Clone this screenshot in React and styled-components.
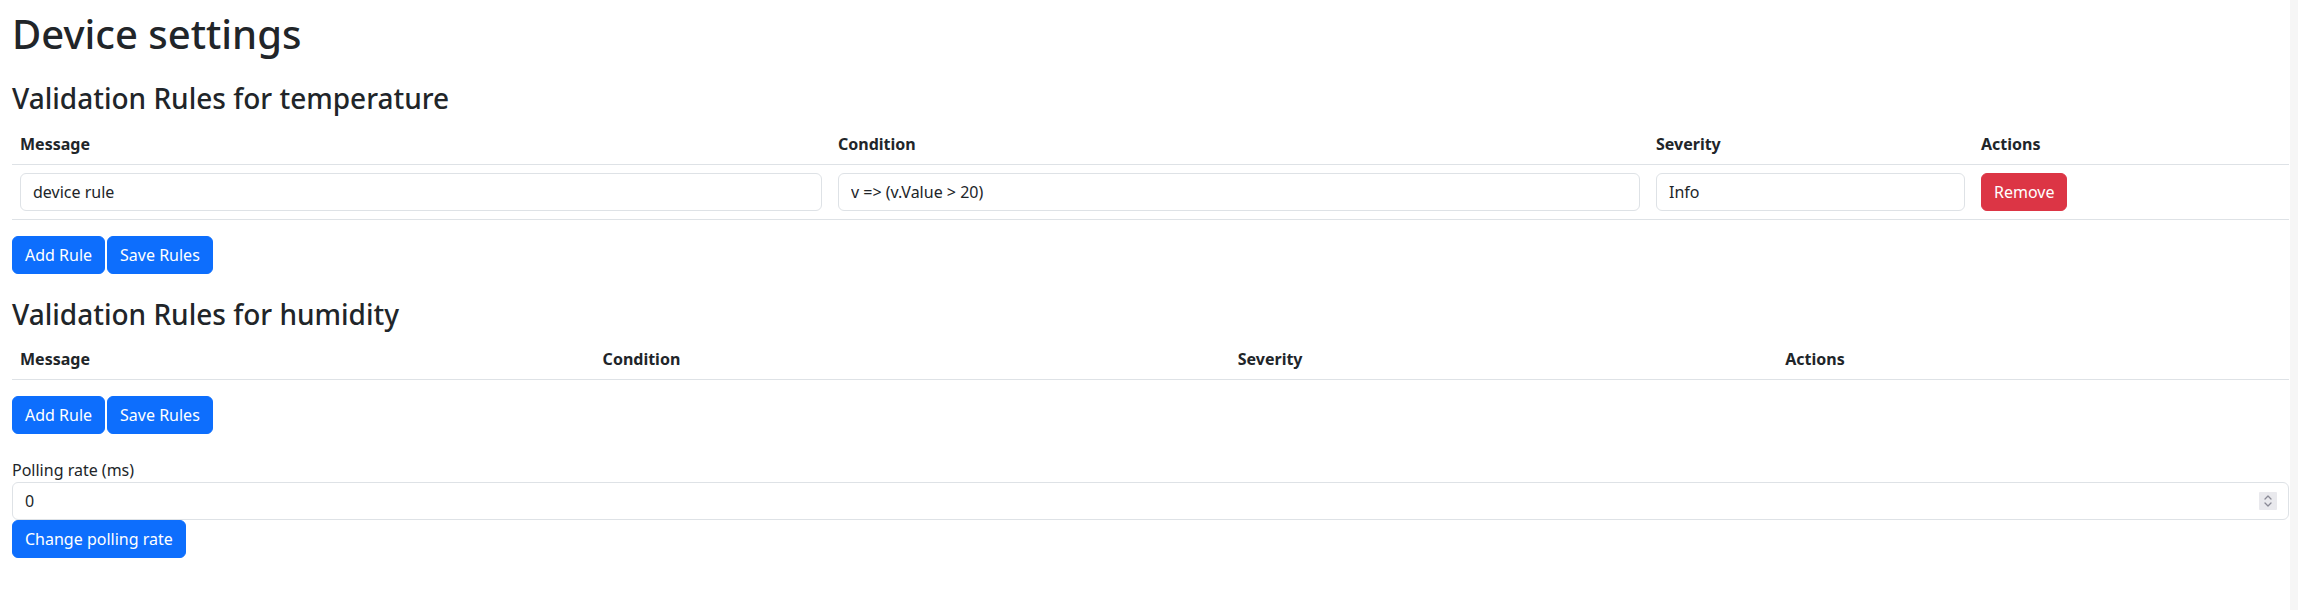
import React, { useState } from "react";
import styled, { createGlobalStyle } from "styled-components";

const GlobalStyle = createGlobalStyle`
  *, *::before, *::after { box-sizing: border-box; }
  body {
    margin: 0;
    font-family: "Noto Sans", "Liberation Sans", Arial, sans-serif;
    font-size: 16px;
    line-height: 1.5;
    color: #212529;
    background: #fff;
  }
`;

const Page = styled.div`
  display: flex;
  min-height: 610px;
`;

const Content = styled.main`
  flex: 1;
  min-width: 0;
  padding: 10px 1px 0 12px;
`;

const ScrollTrack = styled.div`
  width: 8px;
  flex: none;
  background: #f6f6f6;
`;

const Title = styled.h1`
  font-size: 40px;
  font-weight: 500;
  line-height: 1.2;
  margin: 0 0 8px;
`;

const Section = styled.section`
  margin-top: ${(p) => p.$top}px;
`;

const SectionTitle = styled.h3`
  font-size: 28px;
  font-weight: 500;
  line-height: 1.2;
  margin: 0 0 8px;
`;

const Table = styled.table`
  width: 100%;
  border-collapse: collapse;
  table-layout: ${(p) => (p.$fixed ? "fixed" : "auto")};
  margin-bottom: 16px;
  vertical-align: top;
  color: #212529;

  thead { vertical-align: bottom; }

  th, td {
    padding: 8px;
    border-bottom: 1px solid #dee2e6;
  }

  th {
    text-align: left;
    font-weight: 700;
  }
`;

const Col = styled.col`
  width: ${(p) => p.$w}px;
`;

const Input = styled.input`
  display: block;
  width: 100%;
  padding: 6px 12px;
  font-family: inherit;
  font-size: 16px;
  line-height: 1.5;
  color: #212529;
  background: #fff;
  border: 1px solid #dee2e6;
  border-radius: 6px;
  margin: 0;
  outline: none;
  -moz-appearance: textfield;

  &::-webkit-inner-spin-button,
  &::-webkit-outer-spin-button {
    -webkit-appearance: none;
    margin: 0;
  }
`;

const NumberField = styled.div`
  position: relative;
`;

const Spinner = styled.span`
  position: absolute;
  right: 12px;
  top: 50%;
  transform: translateY(-50%);
  width: 18px;
  height: 18px;
  background: #e9e9ed;
  border-radius: 1px;
  display: flex;
  align-items: center;
  justify-content: center;
  pointer-events: none;
`;

const ButtonRow = styled.div`
  display: flex;
  gap: 2px;
`;

const Button = styled.button`
  display: inline-block;
  padding: 6px 12px;
  font-family: inherit;
  font-size: 16px;
  line-height: 1.5;
  color: #fff;
  background: ${(p) => (p.$variant === "danger" ? "#dc3545" : "#0d6efd")};
  border: 1px solid ${(p) => (p.$variant === "danger" ? "#dc3545" : "#0d6efd")};
  border-radius: 6px;
  cursor: pointer;
  white-space: nowrap;
`;

const Label = styled.label`
  display: inline-block;
`;

function RulesTable({ name, rules, widths }) {
  return (
    <>
      <SectionTitle>Validation Rules for {name}</SectionTitle>
      <Table $fixed={!!widths}>
        {widths && (
          <colgroup>
            {widths.map((w, i) => (
              <Col key={i} $w={w} />
            ))}
          </colgroup>
        )}
        <thead>
          <tr>
            <th>Message</th>
            <th>Condition</th>
            <th>Severity</th>
            <th>Actions</th>
          </tr>
        </thead>
        <tbody>
          {rules.map((r, i) => (
            <tr key={i}>
              <td>
                <Input defaultValue={r.message} />
              </td>
              <td>
                <Input defaultValue={r.condition} />
              </td>
              <td>
                <Input defaultValue={r.severity} />
              </td>
              <td>
                <Button $variant="danger">Remove</Button>
              </td>
            </tr>
          ))}
        </tbody>
      </Table>
      <ButtonRow>
        <Button>Add Rule</Button>
        <Button>Save Rules</Button>
      </ButtonRow>
    </>
  );
}

export default function App() {
  const [rate, setRate] = useState(0);
  return (
    <Page>
      <GlobalStyle />
      <Content>
        <Title>Device settings</Title>
        <Section $top={24}>
          <RulesTable
            name="temperature"
            widths={[818, 818, 325, 316]}
            rules={[
              {
                message: "device rule",
                condition: "v => (v.Value > 20)",
                severity: "Info",
              },
            ]}
          />
        </Section>
        <Section $top={24}>
          <RulesTable name="humidity" rules={[]} />
        </Section>
        <Section $top={24}>
          <Label htmlFor="polling">Polling rate (ms)</Label>
          <NumberField>
            <Input
              id="polling"
              type="number"
              value={rate}
              onChange={(e) => setRate(e.target.value)}
            />
            <Spinner>
              <svg width="10" height="14" viewBox="0 0 10 14" fill="none">
                <path
                  d="M2 5 L5 2 L8 5 M2 9 L5 12 L8 9"
                  stroke="#8a8a96"
                  strokeWidth="1.3"
                  strokeLinecap="round"
                  strokeLinejoin="round"
                />
              </svg>
            </Spinner>
          </NumberField>
          <Button>Change polling rate</Button>
        </Section>
      </Content>
      <ScrollTrack />
    </Page>
  );
}
